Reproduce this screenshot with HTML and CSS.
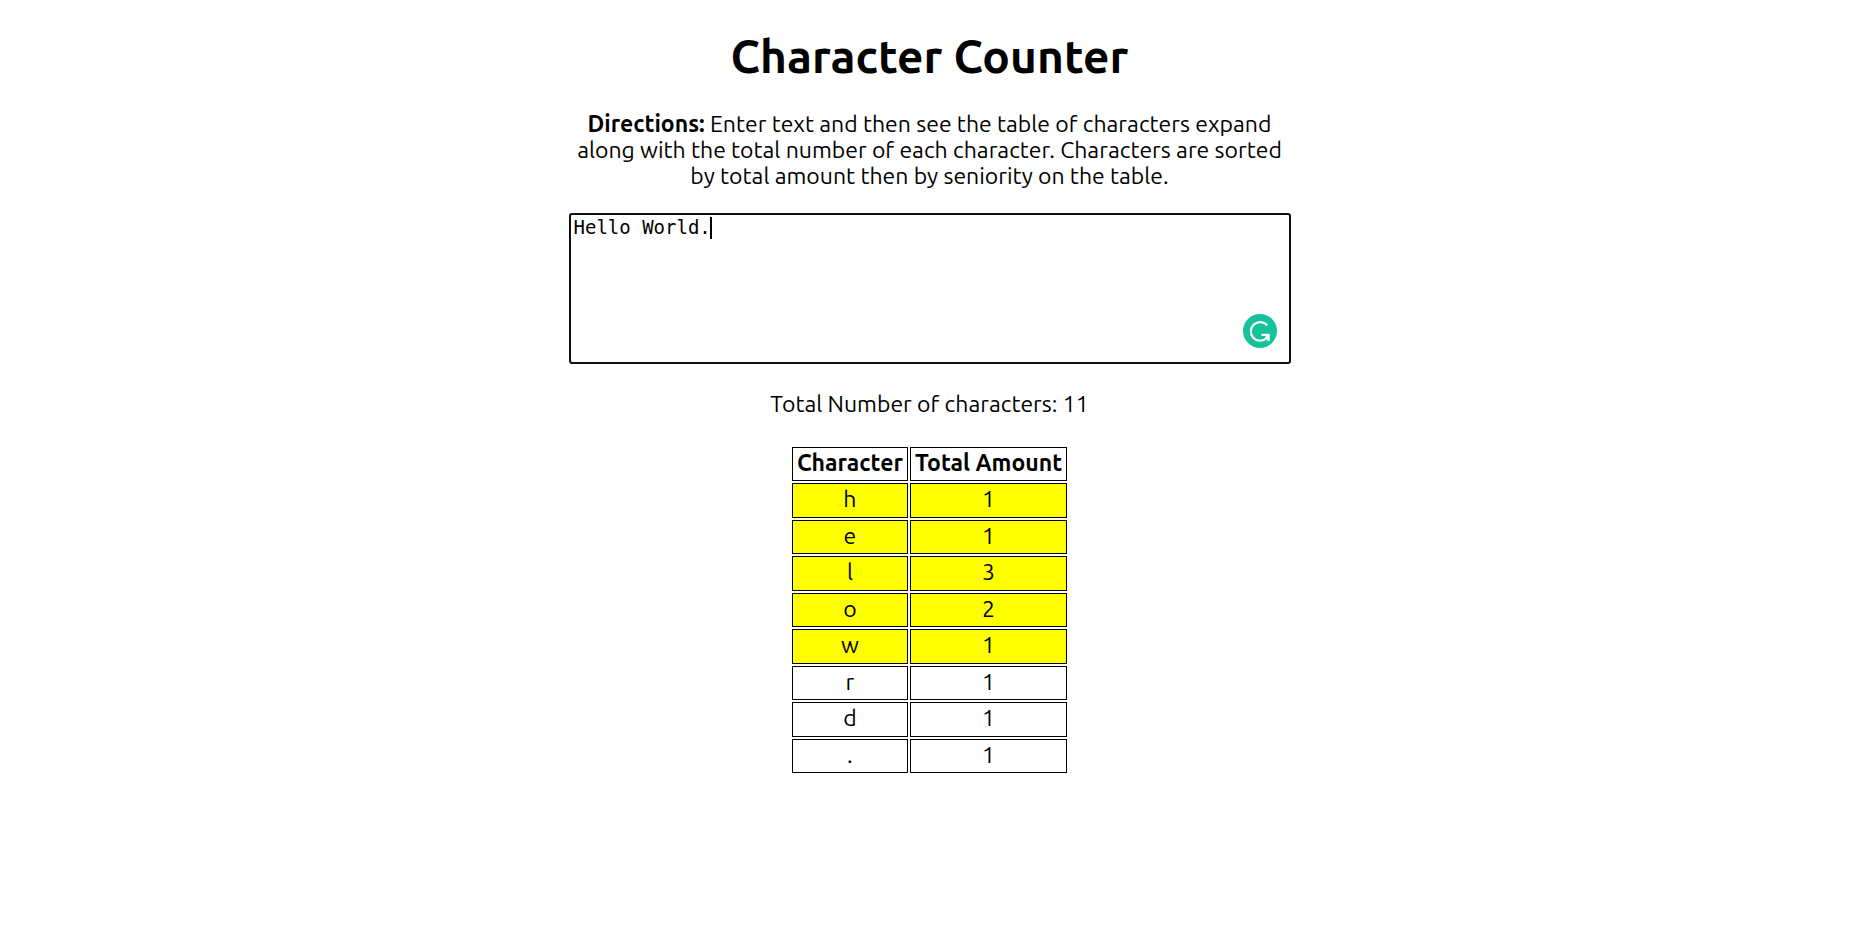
FILE: index.html
```html
<!DOCTYPE html>
<html lang="en">
<head>
<meta charset="utf-8">
<title>Character Counter</title>
<link rel="stylesheet" href="styles.css">
</head>
<body>
<main class="counter">
  <h1 class="title">Character Counter</h1>
  <p class="directions"><label for="entry"><strong>Directions:</strong> Enter text and then see the table of characters expand along with the total number of each character. Characters are sorted by total amount then by seniority on the table.</label></p>
  <div class="editor">
    <textarea class="entry" id="entry" spellcheck="false">Hello World.</textarea>
    <span class="caret"></span>
    <svg class="badge" viewBox="0 0 34 34" aria-hidden="true">
      <circle cx="17" cy="17" r="17" fill="#15c39a"/>
      <path d="M24.2 11.3A9.3 9.3 0 1 0 23.5 24.2M18.5 20.9H25.4V27" fill="none" stroke="#fff" stroke-width="2.2"/>
      <path d="M21.5 20.5H26.5V26.8L24.5 24.8L22.8 26L21.6 24.2L23.2 22Z" fill="#fff"/>
    </svg>
  </div>
  <p class="total">Total Number of characters: 11</p>
  <table class="counts">
    <thead>
      <tr><th scope="col">Character</th><th scope="col">Total Amount</th></tr>
    </thead>
    <tbody>
      <tr class="marked"><td>h</td><td>1</td></tr>
      <tr class="marked"><td>e</td><td>1</td></tr>
      <tr class="marked"><td>l</td><td>3</td></tr>
      <tr class="marked"><td>o</td><td>2</td></tr>
      <tr class="marked"><td>w</td><td>1</td></tr>
      <tr><td>r</td><td>1</td></tr>
      <tr><td>d</td><td>1</td></tr>
      <tr><td>.</td><td>1</td></tr>
    </tbody>
  </table>
</main>
</body>
</html>
```
FILE: styles.css
```css
* {
  box-sizing: border-box;
}

body {
  margin: 0;
  background: #fff;
  color: #000;
  font-family: Ubuntu, "Noto Sans", sans-serif;
  font-size: 23px;
  line-height: 26px;
  text-align: center;
}

.counter {
  display: flex;
  flex-direction: column;
  align-items: center;
  max-width: 722px;
  margin: 0 auto;
  padding-top: 28px;
}

.title {
  margin: 0 0 27px;
  font-size: 46px;
  line-height: 56px;
}

.directions {
  margin: 0 0 24px;
}

.editor {
  position: relative;
  width: 100%;
}

.entry {
  display: block;
  width: 100%;
  height: 151px;
  padding: 2px 3px;
  border: 2px solid #101010;
  border-radius: 3px;
  outline: none;
  resize: none;
  background: #fff;
  color: #000;
  font-family: "DejaVu Sans Mono", monospace;
  font-size: 19px;
  line-height: 20px;
}

.caret {
  position: absolute;
  top: 4px;
  left: 141px;
  width: 2px;
  height: 22px;
  background: #000;
}

.badge {
  position: absolute;
  right: 14px;
  bottom: 16px;
  width: 34px;
  height: 34px;
}

.total {
  margin: 27px 0 28px;
}

.counts {
  border-spacing: 2px;
}

.counts th,
.counts td {
  height: 34px;
  padding: 0 4px 3px;
  border: 1px solid #000;
}

.counts tbody tr:nth-child(odd) td {
  height: 35px;
}

.marked td {
  background: #ff0;
}
```
